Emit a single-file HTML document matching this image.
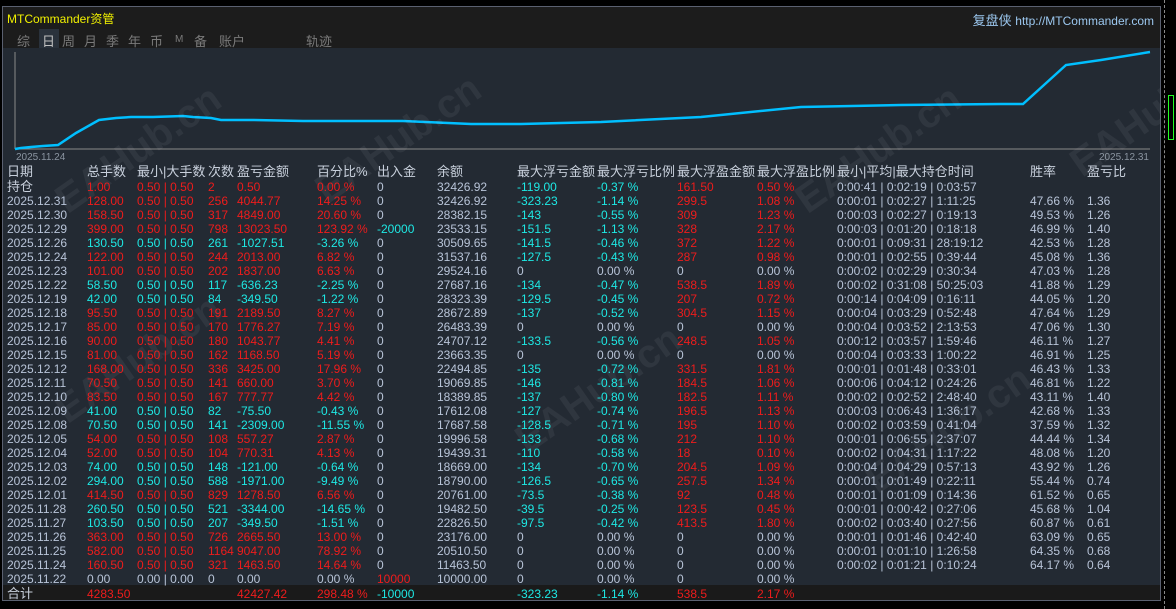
<!DOCTYPE html>
<html><head><meta charset="utf-8"><style>
*{margin:0;padding:0;box-sizing:border-box}
body{width:1176px;height:609px;background:#000;overflow:hidden;position:relative;font-family:"Liberation Sans","Noto Sans CJK SC",sans-serif}
#panel{position:absolute;left:2px;top:6px;width:1159px;height:595px;border:1px solid #5a6070;background:#232a33;overflow:hidden}
#hdr{position:absolute;left:0;top:0;width:100%;height:41px;background:#1c1c1c}
.t{position:absolute;white-space:nowrap}
#title{left:4px;top:3px;color:#f0f000;font-size:12px}
#site{right:6px;top:3px;color:#9cc8f0;font-size:13px}
.tab{position:absolute;top:24px;font-size:13px;color:#7a7a7a;white-space:nowrap}
.row{position:absolute;left:0;width:100%;height:14px;font-size:12px;line-height:14px}
.row span{position:absolute;white-space:nowrap}
.hd{font-size:13px;color:#c8d0dc}
.w{color:#b8c4d8}.r{color:#ee1c1c}.c{color:#1ee8e4}
.a{left:4px}.b{left:84px}.d{left:134px}.e{left:205px}.f{left:234px}.g{left:314px}.h{left:374px}.i{left:434px}.j{left:514px}.k{left:594px}.l{left:674px}.m{left:754px}.n{left:834px}.o{left:1027px}.p{left:1084px}
#foot{position:absolute;left:0;top:578px;width:100%;height:17px;background:#1a1a1a}
.wm{position:absolute;color:rgba(255,255,255,0.06);font-size:40px;font-weight:bold;transform:rotate(-35deg);white-space:nowrap}
</style></head><body>
<div style="position:absolute;left:1164px;top:0;height:609px;border-left:1px dashed #888"></div>
<div style="position:absolute;left:1168px;top:95px;width:6px;height:45px;border:1px solid #2f2"></div>
<div id="panel">
<div id="hdr">
<div class="t" id="title">MTCommander资管</div>
<div class="t" id="site">复盘侠 <span style="font-size:12px">http://MTCommander.com</span></div>
<div class="tab" style="left:14px">综</div>
<div class="tab" style="left:36px;top:22px;width:20px;height:19px;background:#2a323c;color:#c0c0c0;padding:2px 0 0 3px">日</div>
<div class="tab" style="left:59px">周</div>
<div class="tab" style="left:81px">月</div>
<div class="tab" style="left:103px">季</div>
<div class="tab" style="left:125px">年</div>
<div class="tab" style="left:147px">币</div>
<div class="tab" style="left:172px;font-size:10px;top:27px">M</div>
<div class="tab" style="left:191px">备</div>
<div class="tab" style="left:216px">账户</div>
<div class="tab" style="left:303px">轨迹</div>
</div>
<svg style="position:absolute;left:0;top:41px" width="1159" height="120">
<line x1="12" y1="4" x2="12" y2="101" stroke="#8a8a8a"/>
<line x1="12" y1="101" x2="1147" y2="101" stroke="#8a8a8a"/>
<polyline fill="none" stroke="#00bfff" stroke-width="2.5" points="12,101 18,100 28,99 40,98 55,97 73,85 96,72 113,70 128,69 150,69 180,68 190,69 208,70 218,72 250,72 300,73 400,73 468,76 518,76 598,74 698,69 798,59 898,57 998,56 1020,56 1063,17 1098,12 1147,4"/>
<text x="13" y="112" fill="#8a94a0" font-size="10" font-family="Liberation Sans">2025.11.24</text>
<text x="1146" y="112" fill="#8a94a0" font-size="10" font-family="Liberation Sans" text-anchor="end">2025.12.31</text>
</svg>
<div class="wm" style="left:40px;top:120px">EAHub.cn</div>
<div class="wm" style="left:300px;top:110px">EAHub.cn</div>
<div class="wm" style="left:780px;top:120px">EAHub.cn</div>
<div class="wm" style="left:1060px;top:100px">EAHub</div>
<div class="wm" style="left:40px;top:330px">EAHub.cn</div>
<div class="wm" style="left:500px;top:360px">EAHub.cn</div>
<div class="wm" style="left:850px;top:400px">EAHub.cn</div>
<div id="foot"></div>
<div class="row hd" style="top:158px"><span class="a">日期</span><span class="b">总手数</span><span class="d">最小|大手数</span><span class="e">次数</span><span class="f">盈亏金额</span><span class="g">百分比%</span><span class="h">出入金</span><span class="i">余额</span><span class="j">最大浮亏金额</span><span class="k">最大浮亏比例</span><span class="l">最大浮盈金额</span><span class="m">最大浮盈比例</span><span class="n">最小|平均|最大持仓时间</span><span class="o">胜率</span><span class="p">盈亏比</span></div>
<div class="row" style="top:173px"><span class="a hd">持仓</span><span class="b r">1.00</span><span class="d r">0.50 | 0.50</span><span class="e r">2</span><span class="f r">0.50</span><span class="g r">0.00 %</span><span class="h w">0</span><span class="i w">32426.92</span><span class="j c">-119.00</span><span class="k c">-0.37 %</span><span class="l r">161.50</span><span class="m r">0.50 %</span><span class="n w">0:00:41 | 0:02:19 | 0:03:57</span></div>
<div class="row" style="top:187px"><span class="a w">2025.12.31</span><span class="b r">128.00</span><span class="d r">0.50 | 0.50</span><span class="e r">256</span><span class="f r">4044.77</span><span class="g r">14.25 %</span><span class="h w">0</span><span class="i w">32426.92</span><span class="j c">-323.23</span><span class="k c">-1.14 %</span><span class="l r">299.5</span><span class="m r">1.08 %</span><span class="n w">0:00:01 | 0:02:27 | 1:11:25</span><span class="o w">47.66 %</span><span class="p w">1.36</span></div>
<div class="row" style="top:201px"><span class="a w">2025.12.30</span><span class="b r">158.50</span><span class="d r">0.50 | 0.50</span><span class="e r">317</span><span class="f r">4849.00</span><span class="g r">20.60 %</span><span class="h w">0</span><span class="i w">28382.15</span><span class="j c">-143</span><span class="k c">-0.55 %</span><span class="l r">309</span><span class="m r">1.23 %</span><span class="n w">0:00:03 | 0:02:27 | 0:19:13</span><span class="o w">49.53 %</span><span class="p w">1.26</span></div>
<div class="row" style="top:215px"><span class="a w">2025.12.29</span><span class="b r">399.00</span><span class="d r">0.50 | 0.50</span><span class="e r">798</span><span class="f r">13023.50</span><span class="g r">123.92 %</span><span class="h c">-20000</span><span class="i w">23533.15</span><span class="j c">-151.5</span><span class="k c">-1.13 %</span><span class="l r">328</span><span class="m r">2.17 %</span><span class="n w">0:00:03 | 0:01:20 | 0:18:18</span><span class="o w">46.99 %</span><span class="p w">1.40</span></div>
<div class="row" style="top:229px"><span class="a w">2025.12.26</span><span class="b c">130.50</span><span class="d c">0.50 | 0.50</span><span class="e c">261</span><span class="f c">-1027.51</span><span class="g c">-3.26 %</span><span class="h w">0</span><span class="i w">30509.65</span><span class="j c">-141.5</span><span class="k c">-0.46 %</span><span class="l r">372</span><span class="m r">1.22 %</span><span class="n w">0:00:01 | 0:09:31 | 28:19:12</span><span class="o w">42.53 %</span><span class="p w">1.28</span></div>
<div class="row" style="top:243px"><span class="a w">2025.12.24</span><span class="b r">122.00</span><span class="d r">0.50 | 0.50</span><span class="e r">244</span><span class="f r">2013.00</span><span class="g r">6.82 %</span><span class="h w">0</span><span class="i w">31537.16</span><span class="j c">-127.5</span><span class="k c">-0.43 %</span><span class="l r">287</span><span class="m r">0.98 %</span><span class="n w">0:00:01 | 0:02:55 | 0:39:44</span><span class="o w">45.08 %</span><span class="p w">1.36</span></div>
<div class="row" style="top:257px"><span class="a w">2025.12.23</span><span class="b r">101.00</span><span class="d r">0.50 | 0.50</span><span class="e r">202</span><span class="f r">1837.00</span><span class="g r">6.63 %</span><span class="h w">0</span><span class="i w">29524.16</span><span class="j w">0</span><span class="k w">0.00 %</span><span class="l w">0</span><span class="m w">0.00 %</span><span class="n w">0:00:02 | 0:02:29 | 0:30:34</span><span class="o w">47.03 %</span><span class="p w">1.28</span></div>
<div class="row" style="top:271px"><span class="a w">2025.12.22</span><span class="b c">58.50</span><span class="d c">0.50 | 0.50</span><span class="e c">117</span><span class="f c">-636.23</span><span class="g c">-2.25 %</span><span class="h w">0</span><span class="i w">27687.16</span><span class="j c">-134</span><span class="k c">-0.47 %</span><span class="l r">538.5</span><span class="m r">1.89 %</span><span class="n w">0:00:02 | 0:31:08 | 50:25:03</span><span class="o w">41.88 %</span><span class="p w">1.29</span></div>
<div class="row" style="top:285px"><span class="a w">2025.12.19</span><span class="b c">42.00</span><span class="d c">0.50 | 0.50</span><span class="e c">84</span><span class="f c">-349.50</span><span class="g c">-1.22 %</span><span class="h w">0</span><span class="i w">28323.39</span><span class="j c">-129.5</span><span class="k c">-0.45 %</span><span class="l r">207</span><span class="m r">0.72 %</span><span class="n w">0:00:14 | 0:04:09 | 0:16:11</span><span class="o w">44.05 %</span><span class="p w">1.20</span></div>
<div class="row" style="top:299px"><span class="a w">2025.12.18</span><span class="b r">95.50</span><span class="d r">0.50 | 0.50</span><span class="e r">191</span><span class="f r">2189.50</span><span class="g r">8.27 %</span><span class="h w">0</span><span class="i w">28672.89</span><span class="j c">-137</span><span class="k c">-0.52 %</span><span class="l r">304.5</span><span class="m r">1.15 %</span><span class="n w">0:00:04 | 0:03:29 | 0:52:48</span><span class="o w">47.64 %</span><span class="p w">1.29</span></div>
<div class="row" style="top:313px"><span class="a w">2025.12.17</span><span class="b r">85.00</span><span class="d r">0.50 | 0.50</span><span class="e r">170</span><span class="f r">1776.27</span><span class="g r">7.19 %</span><span class="h w">0</span><span class="i w">26483.39</span><span class="j w">0</span><span class="k w">0.00 %</span><span class="l w">0</span><span class="m w">0.00 %</span><span class="n w">0:00:04 | 0:03:52 | 2:13:53</span><span class="o w">47.06 %</span><span class="p w">1.30</span></div>
<div class="row" style="top:327px"><span class="a w">2025.12.16</span><span class="b r">90.00</span><span class="d r">0.50 | 0.50</span><span class="e r">180</span><span class="f r">1043.77</span><span class="g r">4.41 %</span><span class="h w">0</span><span class="i w">24707.12</span><span class="j c">-133.5</span><span class="k c">-0.56 %</span><span class="l r">248.5</span><span class="m r">1.05 %</span><span class="n w">0:00:12 | 0:03:57 | 1:59:46</span><span class="o w">46.11 %</span><span class="p w">1.27</span></div>
<div class="row" style="top:341px"><span class="a w">2025.12.15</span><span class="b r">81.00</span><span class="d r">0.50 | 0.50</span><span class="e r">162</span><span class="f r">1168.50</span><span class="g r">5.19 %</span><span class="h w">0</span><span class="i w">23663.35</span><span class="j w">0</span><span class="k w">0.00 %</span><span class="l w">0</span><span class="m w">0.00 %</span><span class="n w">0:00:04 | 0:03:33 | 1:00:22</span><span class="o w">46.91 %</span><span class="p w">1.25</span></div>
<div class="row" style="top:355px"><span class="a w">2025.12.12</span><span class="b r">168.00</span><span class="d r">0.50 | 0.50</span><span class="e r">336</span><span class="f r">3425.00</span><span class="g r">17.96 %</span><span class="h w">0</span><span class="i w">22494.85</span><span class="j c">-135</span><span class="k c">-0.72 %</span><span class="l r">331.5</span><span class="m r">1.81 %</span><span class="n w">0:00:01 | 0:01:48 | 0:33:01</span><span class="o w">46.43 %</span><span class="p w">1.33</span></div>
<div class="row" style="top:369px"><span class="a w">2025.12.11</span><span class="b r">70.50</span><span class="d r">0.50 | 0.50</span><span class="e r">141</span><span class="f r">660.00</span><span class="g r">3.70 %</span><span class="h w">0</span><span class="i w">19069.85</span><span class="j c">-146</span><span class="k c">-0.81 %</span><span class="l r">184.5</span><span class="m r">1.06 %</span><span class="n w">0:00:06 | 0:04:12 | 0:24:26</span><span class="o w">46.81 %</span><span class="p w">1.22</span></div>
<div class="row" style="top:383px"><span class="a w">2025.12.10</span><span class="b r">83.50</span><span class="d r">0.50 | 0.50</span><span class="e r">167</span><span class="f r">777.77</span><span class="g r">4.42 %</span><span class="h w">0</span><span class="i w">18389.85</span><span class="j c">-137</span><span class="k c">-0.80 %</span><span class="l r">182.5</span><span class="m r">1.11 %</span><span class="n w">0:00:02 | 0:02:52 | 2:48:40</span><span class="o w">43.11 %</span><span class="p w">1.40</span></div>
<div class="row" style="top:397px"><span class="a w">2025.12.09</span><span class="b c">41.00</span><span class="d c">0.50 | 0.50</span><span class="e c">82</span><span class="f c">-75.50</span><span class="g c">-0.43 %</span><span class="h w">0</span><span class="i w">17612.08</span><span class="j c">-127</span><span class="k c">-0.74 %</span><span class="l r">196.5</span><span class="m r">1.13 %</span><span class="n w">0:00:03 | 0:06:43 | 1:36:17</span><span class="o w">42.68 %</span><span class="p w">1.33</span></div>
<div class="row" style="top:411px"><span class="a w">2025.12.08</span><span class="b c">70.50</span><span class="d c">0.50 | 0.50</span><span class="e c">141</span><span class="f c">-2309.00</span><span class="g c">-11.55 %</span><span class="h w">0</span><span class="i w">17687.58</span><span class="j c">-128.5</span><span class="k c">-0.71 %</span><span class="l r">195</span><span class="m r">1.10 %</span><span class="n w">0:00:02 | 0:03:59 | 0:41:04</span><span class="o w">37.59 %</span><span class="p w">1.32</span></div>
<div class="row" style="top:425px"><span class="a w">2025.12.05</span><span class="b r">54.00</span><span class="d r">0.50 | 0.50</span><span class="e r">108</span><span class="f r">557.27</span><span class="g r">2.87 %</span><span class="h w">0</span><span class="i w">19996.58</span><span class="j c">-133</span><span class="k c">-0.68 %</span><span class="l r">212</span><span class="m r">1.10 %</span><span class="n w">0:00:01 | 0:06:55 | 2:37:07</span><span class="o w">44.44 %</span><span class="p w">1.34</span></div>
<div class="row" style="top:439px"><span class="a w">2025.12.04</span><span class="b r">52.00</span><span class="d r">0.50 | 0.50</span><span class="e r">104</span><span class="f r">770.31</span><span class="g r">4.13 %</span><span class="h w">0</span><span class="i w">19439.31</span><span class="j c">-110</span><span class="k c">-0.58 %</span><span class="l r">18</span><span class="m r">0.10 %</span><span class="n w">0:00:02 | 0:04:31 | 1:17:22</span><span class="o w">48.08 %</span><span class="p w">1.20</span></div>
<div class="row" style="top:453px"><span class="a w">2025.12.03</span><span class="b c">74.00</span><span class="d c">0.50 | 0.50</span><span class="e c">148</span><span class="f c">-121.00</span><span class="g c">-0.64 %</span><span class="h w">0</span><span class="i w">18669.00</span><span class="j c">-134</span><span class="k c">-0.70 %</span><span class="l r">204.5</span><span class="m r">1.09 %</span><span class="n w">0:00:04 | 0:04:29 | 0:57:13</span><span class="o w">43.92 %</span><span class="p w">1.26</span></div>
<div class="row" style="top:467px"><span class="a w">2025.12.02</span><span class="b c">294.00</span><span class="d c">0.50 | 0.50</span><span class="e c">588</span><span class="f c">-1971.00</span><span class="g c">-9.49 %</span><span class="h w">0</span><span class="i w">18790.00</span><span class="j c">-126.5</span><span class="k c">-0.65 %</span><span class="l r">257.5</span><span class="m r">1.34 %</span><span class="n w">0:00:01 | 0:01:49 | 0:22:11</span><span class="o w">55.44 %</span><span class="p w">0.74</span></div>
<div class="row" style="top:481px"><span class="a w">2025.12.01</span><span class="b r">414.50</span><span class="d r">0.50 | 0.50</span><span class="e r">829</span><span class="f r">1278.50</span><span class="g r">6.56 %</span><span class="h w">0</span><span class="i w">20761.00</span><span class="j c">-73.5</span><span class="k c">-0.38 %</span><span class="l r">92</span><span class="m r">0.48 %</span><span class="n w">0:00:01 | 0:01:09 | 0:14:36</span><span class="o w">61.52 %</span><span class="p w">0.65</span></div>
<div class="row" style="top:495px"><span class="a w">2025.11.28</span><span class="b c">260.50</span><span class="d c">0.50 | 0.50</span><span class="e c">521</span><span class="f c">-3344.00</span><span class="g c">-14.65 %</span><span class="h w">0</span><span class="i w">19482.50</span><span class="j c">-39.5</span><span class="k c">-0.25 %</span><span class="l r">123.5</span><span class="m r">0.45 %</span><span class="n w">0:00:01 | 0:00:42 | 0:27:06</span><span class="o w">45.68 %</span><span class="p w">1.04</span></div>
<div class="row" style="top:509px"><span class="a w">2025.11.27</span><span class="b c">103.50</span><span class="d c">0.50 | 0.50</span><span class="e c">207</span><span class="f c">-349.50</span><span class="g c">-1.51 %</span><span class="h w">0</span><span class="i w">22826.50</span><span class="j c">-97.5</span><span class="k c">-0.42 %</span><span class="l r">413.5</span><span class="m r">1.80 %</span><span class="n w">0:00:02 | 0:03:40 | 0:27:56</span><span class="o w">60.87 %</span><span class="p w">0.61</span></div>
<div class="row" style="top:523px"><span class="a w">2025.11.26</span><span class="b r">363.00</span><span class="d r">0.50 | 0.50</span><span class="e r">726</span><span class="f r">2665.50</span><span class="g r">13.00 %</span><span class="h w">0</span><span class="i w">23176.00</span><span class="j w">0</span><span class="k w">0.00 %</span><span class="l w">0</span><span class="m w">0.00 %</span><span class="n w">0:00:01 | 0:01:46 | 0:42:40</span><span class="o w">63.09 %</span><span class="p w">0.65</span></div>
<div class="row" style="top:537px"><span class="a w">2025.11.25</span><span class="b r">582.00</span><span class="d r">0.50 | 0.50</span><span class="e r">1164</span><span class="f r">9047.00</span><span class="g r">78.92 %</span><span class="h w">0</span><span class="i w">20510.50</span><span class="j w">0</span><span class="k w">0.00 %</span><span class="l w">0</span><span class="m w">0.00 %</span><span class="n w">0:00:01 | 0:01:10 | 1:26:58</span><span class="o w">64.35 %</span><span class="p w">0.68</span></div>
<div class="row" style="top:551px"><span class="a w">2025.11.24</span><span class="b r">160.50</span><span class="d r">0.50 | 0.50</span><span class="e r">321</span><span class="f r">1463.50</span><span class="g r">14.64 %</span><span class="h w">0</span><span class="i w">11463.50</span><span class="j w">0</span><span class="k w">0.00 %</span><span class="l w">0</span><span class="m w">0.00 %</span><span class="n w">0:00:02 | 0:01:21 | 0:10:24</span><span class="o w">64.17 %</span><span class="p w">0.64</span></div>
<div class="row" style="top:565px"><span class="a w">2025.11.22</span><span class="b w">0.00</span><span class="d w">0.00 | 0.00</span><span class="e w">0</span><span class="f w">0.00</span><span class="g w">0.00 %</span><span class="h r">10000</span><span class="i w">10000.00</span><span class="j w">0</span><span class="k w">0.00 %</span><span class="l w">0</span><span class="m w">0.00 %</span></div>
<div class="row" style="top:580px"><span class="a hd">合计</span><span class="b r">4283.50</span><span class="f r">42427.42</span><span class="g r">298.48 %</span><span class="h c">-10000</span><span class="j c">-323.23</span><span class="k c">-1.14 %</span><span class="l r">538.5</span><span class="m r">2.17 %</span></div>
</div>
</body></html>
